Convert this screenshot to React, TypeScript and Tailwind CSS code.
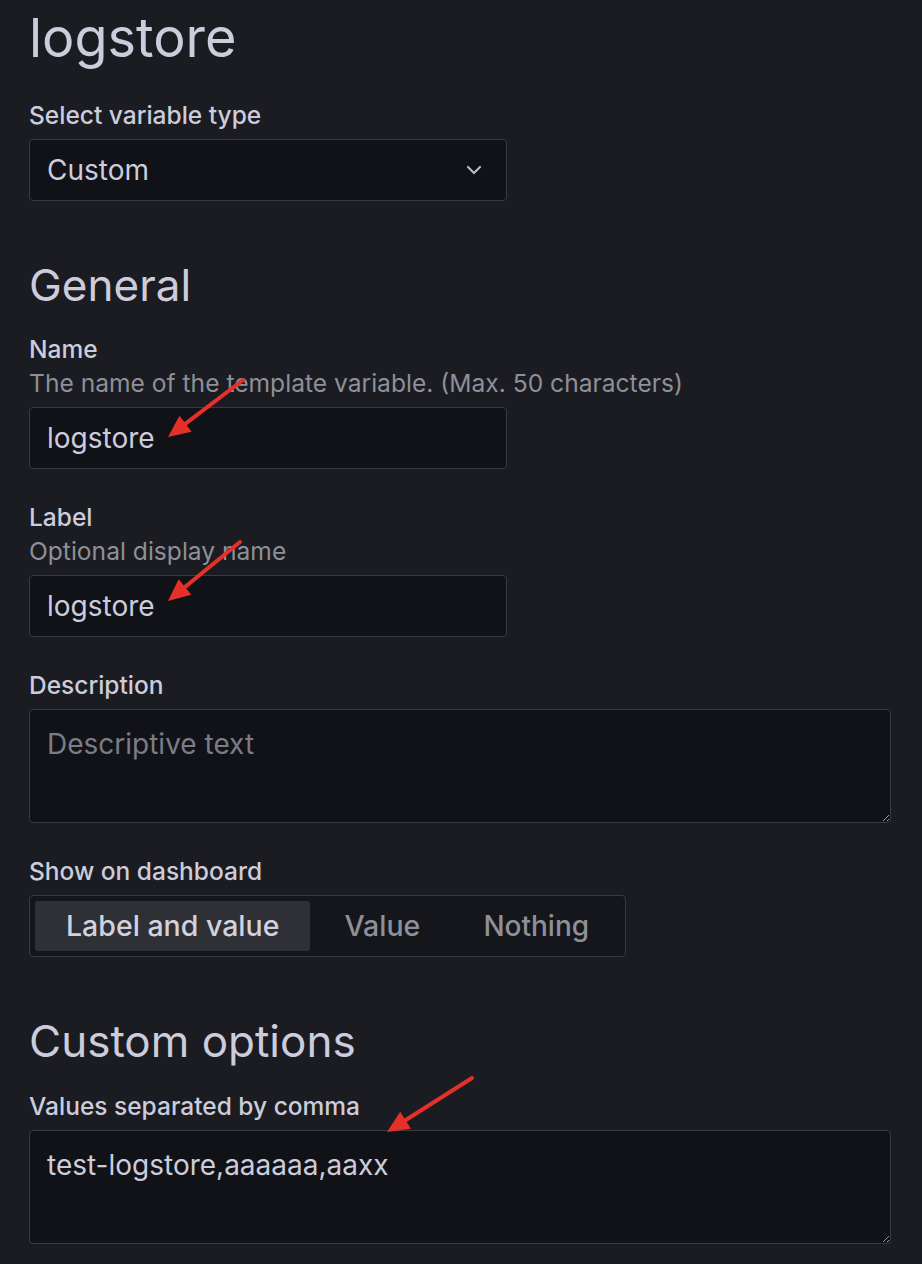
import type { ReactNode } from 'react';

type Arrow = { from: [number, number]; to: [number, number] };

const arrows: Arrow[] = [
  { from: [243, 380], to: [168, 437] },
  { from: [240, 542], to: [168, 601] },
  { from: [472, 1078], to: [387, 1132] },
];

function ArrowMark({ from, to }: Arrow) {
  const dx = to[0] - from[0];
  const dy = to[1] - from[1];
  const len = Math.hypot(dx, dy);
  const ux = dx / len;
  const uy = dy / len;
  const bx = to[0] - ux * 22;
  const by = to[1] - uy * 22;
  const nx = -uy;
  const ny = ux;
  const head = `${to[0]},${to[1]} ${bx + nx * 10},${by + ny * 10} ${bx - nx * 10},${by - ny * 10}`;
  return (
    <g>
      <line x1={from[0]} y1={from[1]} x2={bx + ux * 2} y2={by + uy * 2} stroke="#e5302a" strokeWidth={4} strokeLinecap="round" />
      <polygon points={head} fill="#e5302a" />
    </g>
  );
}

function Field({ label, hint, children, className = '' }: { label: string; hint?: string; children: ReactNode; className?: string }) {
  return (
    <div className={className}>
      <div className="text-[24.5px] font-medium leading-[34px] text-[#ccccdc]">{label}</div>
      {hint && <div className="text-[24.6px] leading-[34px] text-[#8e8f98]">{hint}</div>}
      <div className="mt-[7px]">{children}</div>
    </div>
  );
}

function TextBox({ value }: { value: string }) {
  return (
    <div className="flex h-[62px] w-[478px] items-center rounded-[4px] border border-[#3a3b42] bg-[#111217] px-[17px] text-[28px] text-[#ccccdc]">
      {value}
    </div>
  );
}

function Area({ value, placeholder }: { value?: string; placeholder?: string }) {
  return (
    <textarea
      readOnly
      defaultValue={value}
      placeholder={placeholder}
      className="block h-[114px] w-[862px] rounded-[4px] border border-[#3a3b42] bg-[#111217] px-[17px] pt-[16px] text-[28px] leading-[36px] text-[#ccccdc] outline-none [color-scheme:dark] placeholder:text-[#7b7c85]"
    />
  );
}

export default function App() {
  return (
    <div className="relative min-h-[1264px] overflow-hidden bg-[#1a1c21] pl-[29px] font-['Inter','Noto_Sans',sans-serif] antialiased">
      <h1 className="pt-[8px] text-[54px] font-normal leading-[60px] text-[#ccccdc]">logstore</h1>

      <Field label="Select variable type" className="mt-[30px]">
        <div className="flex h-[62px] w-[478px] items-center justify-between rounded-[4px] border border-[#3a3b42] bg-[#111217] pl-[17px] pr-[24px] text-[28px] text-[#ccccdc]">
          <span>Custom</span>
          <svg width="16" height="10" viewBox="0 0 16 10" fill="none">
            <polyline points="2,2 8,8 14,2" stroke="#b8b8c6" strokeWidth="2.2" strokeLinecap="round" strokeLinejoin="round" />
          </svg>
        </div>
      </Field>

      <h2 className="mt-[56px] text-[44px] font-normal leading-[56px] text-[#ccccdc]">General</h2>

      <Field label="Name" hint="The name of the template variable. (Max. 50 characters)" className="mt-[19px]">
        <TextBox value="logstore" />
      </Field>

      <Field label="Label" hint="Optional display name" className="mt-[31px]">
        <TextBox value="logstore" />
      </Field>

      <Field label="Description" className="mt-[31px]">
        <Area placeholder="Descriptive text" />
      </Field>

      <Field label="Show on dashboard" className="mt-[31px]">
        <div className="flex h-[62px] w-[597px] items-center gap-[2px] whitespace-nowrap rounded-[4px] border border-[#3a3b42] bg-[#15161b] px-[5px]">
          <div className="flex h-[50px] shrink-0 items-center rounded-[3px] bg-[#2e3036] px-[31px] text-[28.5px] font-medium text-[#d2d2de]">
            Label and value
          </div>
          <div className="flex h-[50px] shrink-0 items-center px-[32px] text-[28.5px] font-medium text-[#8e8f98]">Value</div>
          <div className="flex h-[50px] shrink-0 items-center pl-[29px] pr-[32px] text-[28px] font-medium text-[#8e8f98]">Nothing</div>
        </div>
      </Field>

      <h2 className="mt-[56px] text-[44px] font-normal leading-[56px] text-[#ccccdc]">Custom options</h2>

      <Field label="Values separated by comma" className="mt-[20px]">
        <Area value="test-logstore,aaaaaa,aaxx" />
      </Field>

      <svg className="pointer-events-none absolute inset-0" width="922" height="1264">
        {arrows.map((a, i) => (
          <ArrowMark key={i} {...a} />
        ))}
      </svg>
    </div>
  );
}
